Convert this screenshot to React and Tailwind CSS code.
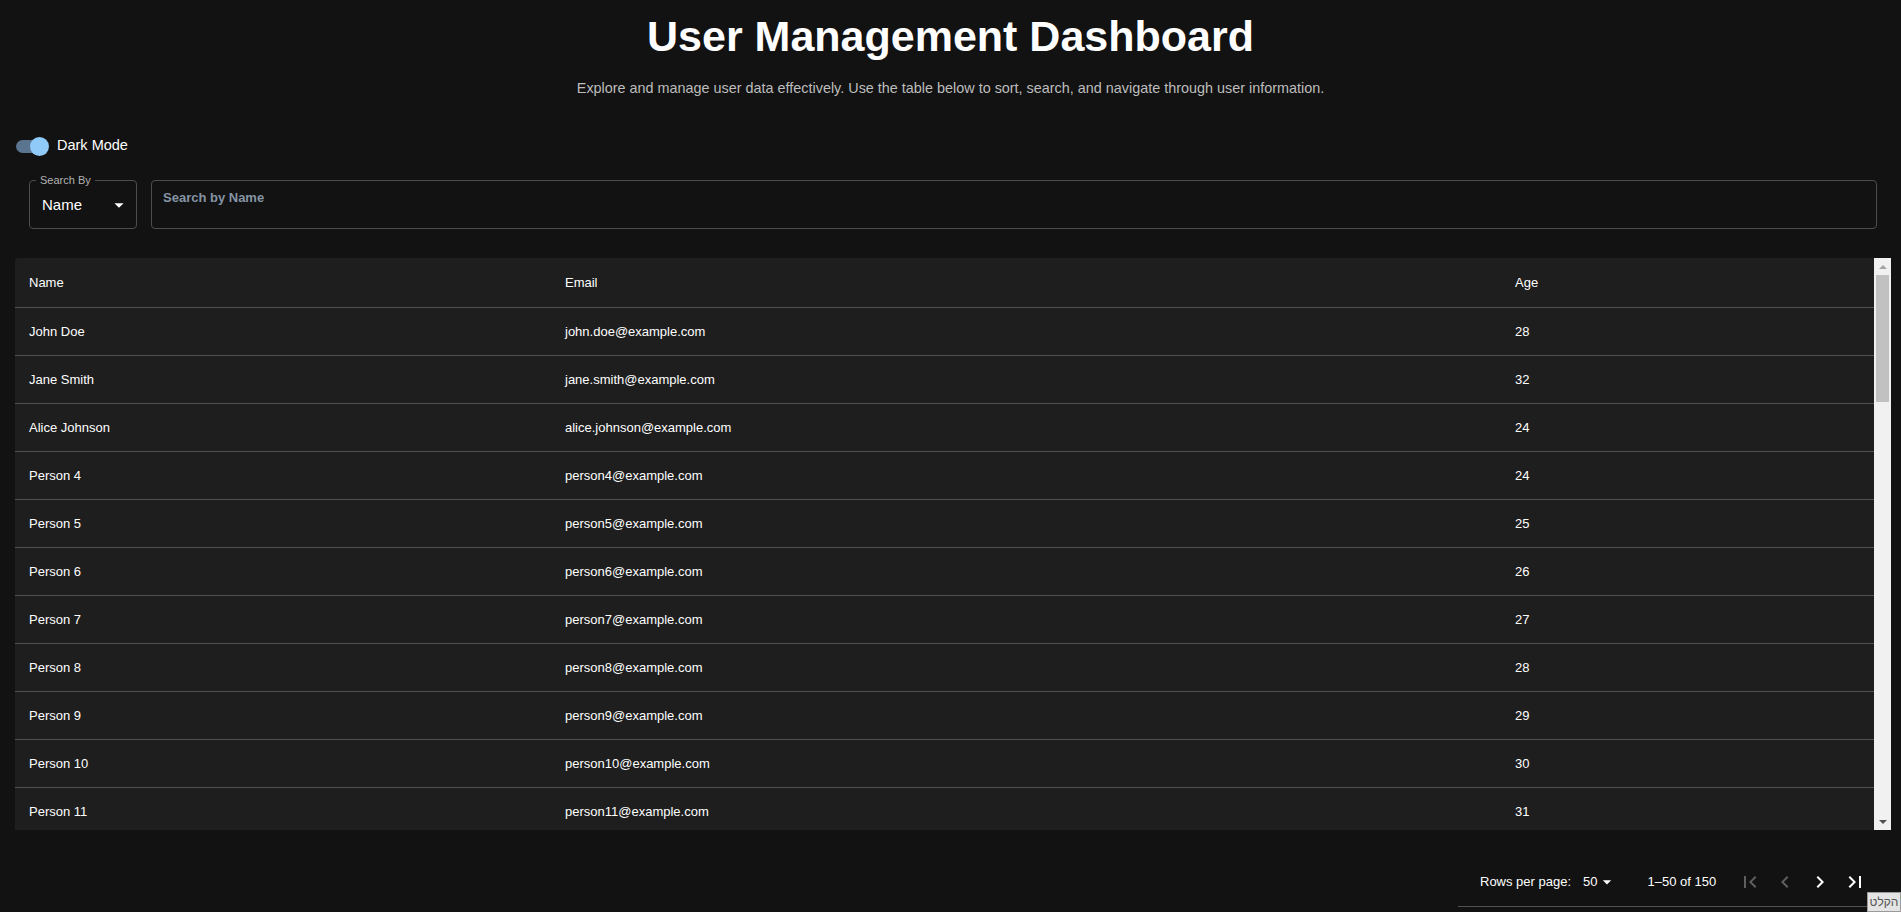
import React from "react";

const users = [
  { name: "John Doe", email: "john.doe@example.com", age: 28 },
  { name: "Jane Smith", email: "jane.smith@example.com", age: 32 },
  { name: "Alice Johnson", email: "alice.johnson@example.com", age: 24 },
  ...Array.from({ length: 8 }, (_, i) => ({
    name: `Person ${i + 4}`,
    email: `person${i + 4}@example.com`,
    age: 24 + i,
  })),
];

function Icon({ d, className }) {
  return (
    <svg viewBox="0 0 24 24" className={className} fill="currentColor">
      <path d={d} />
    </svg>
  );
}

const ARROW_DOWN = "M7 10l5 5 5-5z";

export default function App() {
  return (
    <div
      className="min-h-[912px] bg-[#121212] text-white"
      style={{ fontFamily: '"Liberation Sans", Arial, sans-serif' }}
    >
      {/* Header */}
      <h1 className="pt-[12px] text-center text-[43px] leading-[48px] font-bold">
        User Management Dashboard
      </h1>
      <p className="mt-[18px] text-center text-[14.4px] leading-[20px] text-[#bdbdbd]">
        Explore and manage user data effectively. Use the table below to sort, search, and navigate through user information.
      </p>

      {/* Dark mode switch */}
      <div className="mt-[38px] flex items-center pl-[16px] h-[20px]">
        <div className="flex items-center w-[34px] h-[20px]">
          <div className="w-[30px] h-[13px] rounded-full bg-[#5b7590] flex justify-end items-center">
            <div className="w-[19px] h-[19px] rounded-full bg-[#90caf9] -mr-[3px]" />
          </div>
        </div>
        <span className="ml-[7px] text-[14.5px]">Dark Mode</span>
      </div>

      {/* Search */}
      <div className="mt-[24px] flex gap-[14px] pl-[29px] pr-[24px]">
        <div className="relative w-[108px] h-[49px] rounded-[4px] border border-[#4d4d4d] flex items-center justify-between pl-[12px] pr-[13px]">
          <span className="absolute -top-[8px] left-[6px] px-[4px] bg-[#121212] text-[11px] leading-[14px] text-[#b3b3b3]">
            Search By
          </span>
          <span className="text-[15px] mt-[2px]">Name</span>
          <Icon d={ARROW_DOWN} className="w-[22px] h-[22px] -mr-[7px] text-white" />
        </div>
        <div className="flex-1 h-[49px] rounded-[4px] border border-[#4d4d4d] pl-[11px] pt-[4px]">
          <span className="text-[13px] font-bold text-[#8594a4]">Search by Name</span>
        </div>
      </div>

      {/* Table */}
      <div className="mt-[29px] ml-[15px] mr-[10px] h-[572px] flex rounded-tl-[4px] overflow-hidden bg-[#1e1e1e]">
        <div className="flex-1 overflow-hidden text-[13px]">
          <div className="grid grid-cols-[536px_950px_1fr] h-[50px] items-center border-b border-[#515151] font-medium">
            <div className="pl-[14px]">Name</div>
            <div className="pl-[14px]">Email</div>
            <div className="pl-[14px]">Age</div>
          </div>
          {users.map((u) => (
            <div
              key={u.email}
              className="grid grid-cols-[536px_950px_1fr] h-[48px] items-center border-b border-[#515151]"
            >
              <div className="pl-[14px]">{u.name}</div>
              <div className="pl-[14px]">{u.email}</div>
              <div className="pl-[14px]">{u.age}</div>
            </div>
          ))}
        </div>
        {/* scrollbar */}
        <div className="w-[17px] bg-[#f1f1f1] flex flex-col items-center">
          <div className="h-[17px] flex items-center justify-center">
            <div className="w-0 h-0 border-l-[4px] border-r-[4px] border-b-[4px] border-l-transparent border-r-transparent border-b-[#a3a3a3]" />
          </div>
          <div className="w-[13px] h-[127px] bg-[#c1c1c1]" />
          <div className="flex-1" />
          <div className="h-[17px] flex items-center justify-center">
            <div className="w-0 h-0 border-l-[4px] border-r-[4px] border-t-[4px] border-l-transparent border-r-transparent border-t-[#505050]" />
          </div>
        </div>
      </div>

      {/* Pagination */}
      <div className="flex justify-end mr-[10px] mt-[28px]">
        <div className="w-[433px] h-[49px] border-b border-[#515151] flex items-center pl-[22px] text-[13px]">
          <span>Rows per page:</span>
          <span className="ml-[12px]">50</span>
          <Icon d={ARROW_DOWN} className="w-[20px] h-[20px] -ml-[1px] text-white" />
          <span className="ml-[31px]">1–50 of 150</span>
          <div className="ml-[22px] flex items-center gap-[11px]">
            <Icon d="M18.41 16.59L13.82 12l4.59-4.59L17 6l-6 6 6 6zM6 6h2v12H6z" className="w-[24px] h-[24px] text-[#5f5f5f]" />
            <Icon d="M15.41 7.41 14 6l-6 6 6 6 1.41-1.41L10.83 12z" className="w-[24px] h-[24px] text-[#5f5f5f]" />
            <Icon d="M10 6 8.59 7.41 13.17 12l-4.58 4.59L10 18l6-6z" className="w-[24px] h-[24px] text-white" />
            <Icon d="M5.59 7.41L10.18 12l-4.59 4.59L7 18l6-6-6-6zM16 6h2v12h-2z" className="w-[24px] h-[24px] text-white" />
          </div>
        </div>
      </div>

      {/* overlay badge */}
      <div className="fixed bottom-0 right-0 w-[34px] h-[20px] bg-[#e4e4e4] border border-[#9a9a9a] text-[12px] leading-[18px] text-[#555] text-center overflow-hidden" dir="rtl">
        הקלט
      </div>
    </div>
  );
}
